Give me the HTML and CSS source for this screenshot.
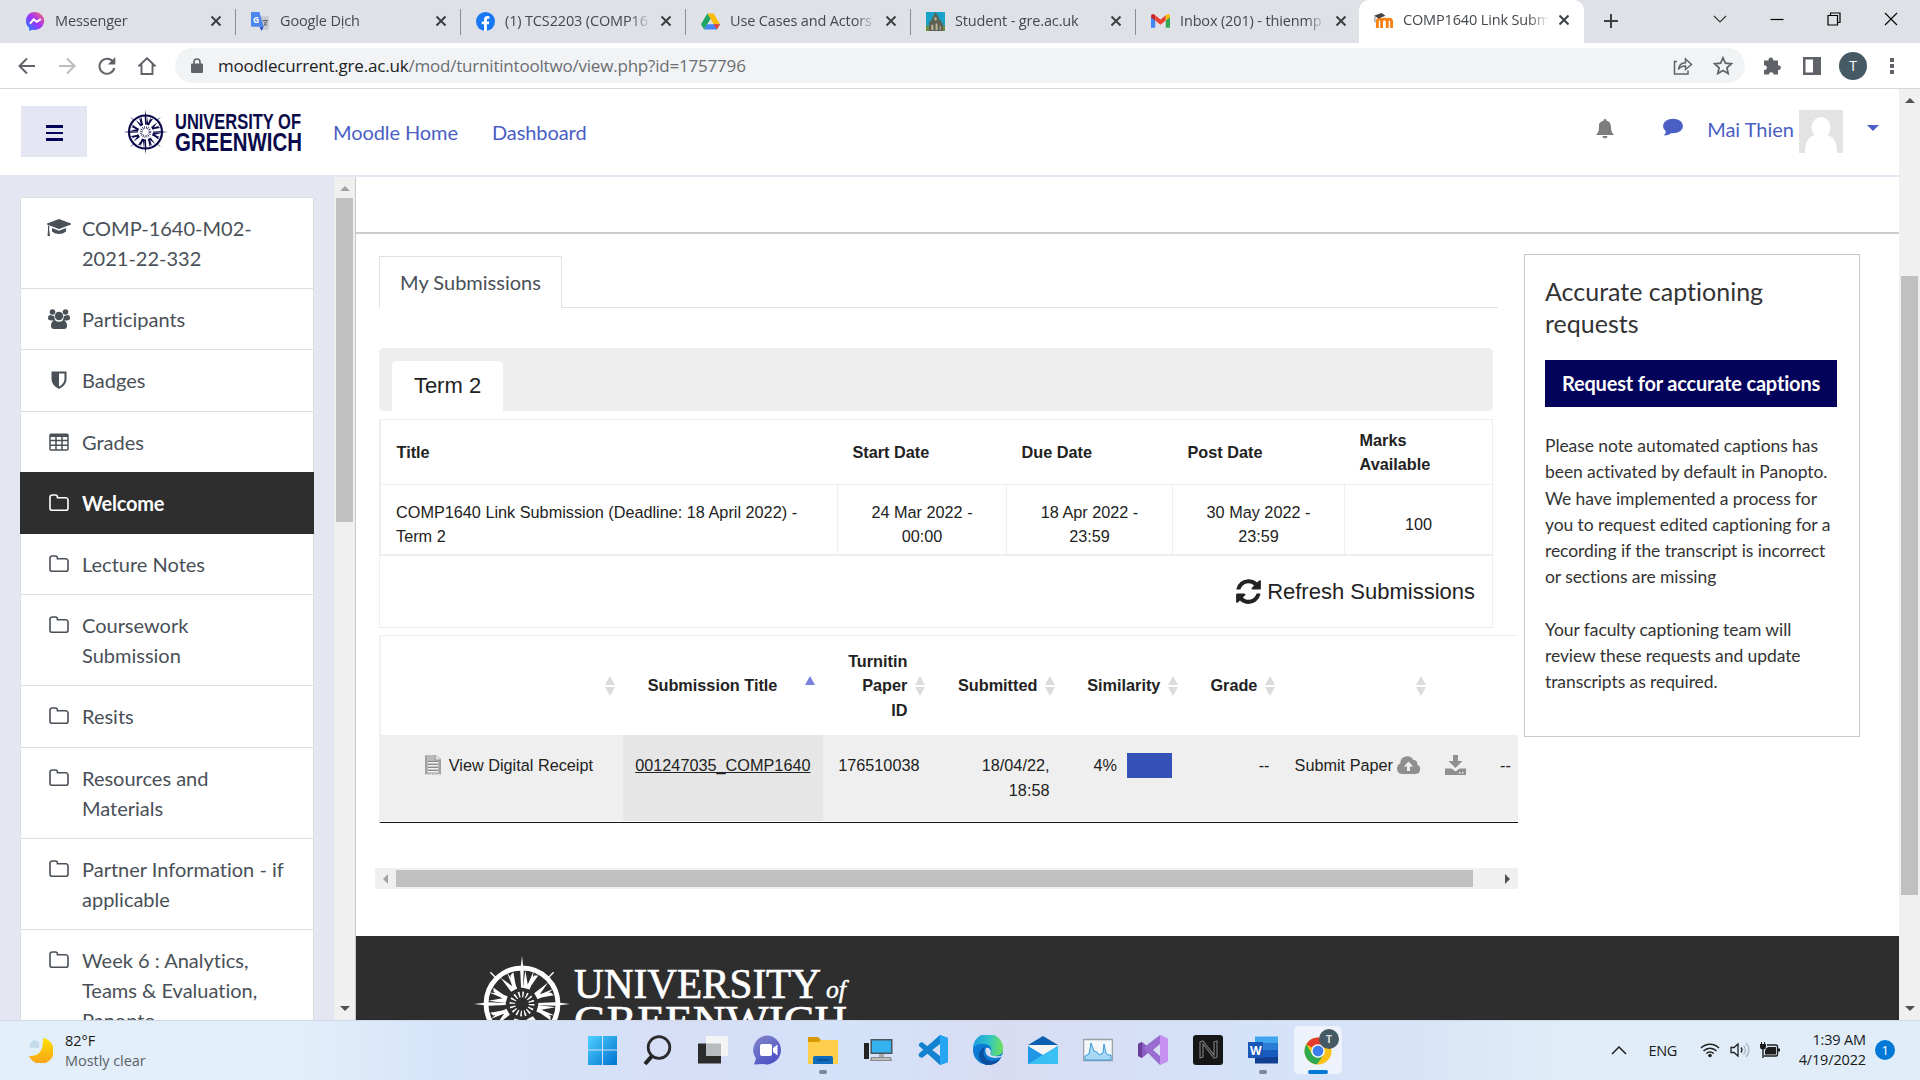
FILE: index.html
```html
<!DOCTYPE html>
<html lang="en">
<head>
<meta charset="utf-8">
<title>COMP1640 Link Submission</title>
<link rel="stylesheet" href="styles.css">
</head>
<body>
<svg class="defs" width="0" height="0">
  <defs>
    <symbol id="folder" viewBox="0 0 20 18"><path d="M1 3.2A2.2 2.2 0 0 1 3.2 1h3.2A2 2 0 0 1 8.4 3v.8h8.4A2.2 2.2 0 0 1 19 6v8.3a2 2 0 0 1-2 2H3a2 2 0 0 1-2-2z" fill="none" stroke="currentColor" stroke-width="1.6"/></symbol>
    <symbol id="x" viewBox="0 0 12 12"><path d="M1.5 1.500l9 9M10.500 1.500l-9 9" stroke="currentColor" stroke-width="2" fill="none"/></symbol>
    <symbol id="sort" viewBox="0 0 10 20"><path d="M5 0l5 9H0zM0 11h10l-5 9z" fill="#dcdcdc"/></symbol>
    <symbol id="compass" viewBox="-50 -50 100 100">
      <circle r="37.500" fill="none" stroke="currentColor" stroke-width="5"/>
      <g fill="currentColor">
        <path id="ray" d="M0-50L1.800-34 1-17-1-17-1.800-34z"/>
        <use href="#ray" transform="rotate(90)"/><use href="#ray" transform="rotate(180)"/><use href="#ray" transform="rotate(270)"/>
        <path id="petal" d="M1-17L3.500-35 6-20 12-34 11-24 8-15z"/>
        <use href="#petal" transform="rotate(45)"/><use href="#petal" transform="rotate(90)"/><use href="#petal" transform="rotate(135)"/>
        <use href="#petal" transform="rotate(180)"/><use href="#petal" transform="rotate(225)"/><use href="#petal" transform="rotate(270)"/><use href="#petal" transform="rotate(315)"/>
        <path id="blade" d="M-9-33L-12-30-10-17-6-16z"/>
        <use href="#blade" transform="rotate(45)"/><use href="#blade" transform="rotate(90)"/><use href="#blade" transform="rotate(135)"/>
        <use href="#blade" transform="rotate(180)"/><use href="#blade" transform="rotate(225)"/><use href="#blade" transform="rotate(270)"/><use href="#blade" transform="rotate(315)"/>
      </g>
      <path d="M27-27l6-6M-27-27l-6-6M27 27l6 6M-27 27l-6 6" stroke="currentColor" stroke-width="1.500"/>
      <circle r="10" fill="none" stroke="currentColor" stroke-width="6" stroke-dasharray="1.500 2.427"/>
    </symbol>
  </defs>
</svg>

<div class="tabstrip">
  <div class="tab"><svg class="fav" viewBox="0 0 18 18"><defs><linearGradient id="ms" x1="0" y1="1" x2="1" y2="0"><stop offset="0" stop-color="#0a8cff"/><stop offset=".5" stop-color="#a033ff"/><stop offset="1" stop-color="#ff6a68"/></linearGradient></defs><path d="M9 0a9 8.500 0 1 1-3 16.700L3 18v-3A8.500 8.500 0 0 1 9 0z" fill="url(#ms)"/><path d="M3.800 11l3.400-4 3 2.300L14 6.800" fill="none" stroke="#fff" stroke-width="1.900"/></svg><span class="tt">Messenger</span><svg class="cl"><use href="#x"/></svg></div>
  <div class="tab"><svg class="fav" viewBox="0 0 18 18"><path d="M7 4h10v13H11z" fill="#c9cdd2"/><path d="M0 1q0-1 1-1h7l4 14H1q-1 0-1-1z" fill="#4a86ee"/><path d="M8 14h4l-2 4z" fill="#2a56c6"/><text x="2" y="10" class="gt">G</text><path d="M11 8h5M13.500 7v1M15 8q-1 4-3 5M12 9l3 4" stroke="#6a7077" fill="none"/></svg><span class="tt">Google Dịch</span><svg class="cl"><use href="#x"/></svg></div>
  <div class="tab"><svg class="fav" viewBox="0 0 20 20"><circle cx="10" cy="10" r="10" fill="#1877f2"/><path d="M8.500 20v-7H6v-3h2.500V8q0-3.700 3.600-3.700l2 .2V7h-1.300q-1.400 0-1.400 1.300V10H14l-.5 3h-2.100v7z" fill="#fff"/></svg><span class="tt">(1) TCS2203 (COMP16</span><svg class="cl"><use href="#x"/></svg></div>
  <div class="tab"><svg class="fav" viewBox="0 0 18 18"><path d="M6 1.500h6l6 10h-6z" fill="#fbbc04"/><path d="M6 1.500l3 5-6 10-3-5z" fill="#1fa463"/><path d="M6 11.500h12l-3 5H3z" fill="#4285f4"/><path d="M12 11.500h6l-3 5z" fill="#ea4335"/></svg><span class="tt">Use Cases and Actors</span><svg class="cl"><use href="#x"/></svg></div>
  <div class="tab"><svg class="fav" viewBox="0 0 18 18"><path d="M0 0h18v18H0z" fill="#1aa3c9"/><path d="M0 13h18v5H0z" fill="#6f8b3d"/><path d="M3 18V9h2V7l2-3 1-2 1-2 1 2 2 3v2h2v3h2v8z" fill="#5d5f50"/><path d="M5 12h2v5H5zM9 11h2v6H9zM13 13h1v4h-1zM8 5h2v3H8z" fill="#b9b49b"/></svg><span class="tt">Student - gre.ac.uk</span><svg class="cl"><use href="#x"/></svg></div>
  <div class="tab last"><svg class="fav" viewBox="0 0 18 18"><path d="M0 4v11h4V8z" fill="#4285f4"/><path d="M14 8v7h4V4z" fill="#34a853"/><path d="M0 4q0-2 2-2l2 1v5L0 5z" fill="#c5221f"/><path d="M4 3l5 4 5-4v5l-5 4-5-4z" fill="#ea4335"/><path d="M14 3q4-2.500 4 1v1l-4 3z" fill="#fbbc04"/></svg><span class="tt">Inbox (201) - thienmp</span><svg class="cl"><use href="#x"/></svg></div>
  <div class="tab active"><svg class="fav" viewBox="0 0 20 18"><path d="M3.500 17V10q0-2.500 2.300-2.500T8 10v7M8 10q0-2.500 3-2.500t3 2.500v7M14 10q0-2.500 2-2.500 2.500 0 2.500 2.500v7" fill="none" stroke="#f98012" stroke-width="3"/><path d="M0 4l8-3 4 3-7 3z" fill="#444"/><path d="M1 5v6" stroke="#777"/></svg><span class="tt">COMP1640 Link Subm</span><svg class="cl"><use href="#x"/></svg></div>
  <svg class="plus" viewBox="0 0 16 16"><path d="M8 1v14M1 8h14" stroke="#3c4043" stroke-width="2"/></svg>
  <div class="winbtns">
    <svg viewBox="0 0 14 14"><path d="M1 4l6 6 6-6" fill="none" stroke="#333" stroke-width="1.200"/></svg>
    <svg viewBox="0 0 14 14"><path d="M0.500 7.500h13" stroke="#000" stroke-width="1.200"/></svg>
    <svg viewBox="0 0 14 14"><path d="M1 3.500h9.500V13H1zM3.500 3V1H13v9.500h-2.500" fill="none" stroke="#000" stroke-width="1.200"/></svg>
    <svg viewBox="0 0 14 14"><path d="M1 1l12 12M13 1L1 13" stroke="#000" stroke-width="1.100"/></svg>
  </div>
</div>

<div class="toolbar">
  <div class="nav">
    <svg viewBox="0 0 18 18"><path d="M17 9H2M9 1.500L1.500 9 9 16.500" fill="none" stroke="#5f6368" stroke-width="2"/></svg>
    <svg viewBox="0 0 18 18"><path d="M1 9h15M9 1.500L16.500 9 9 16.500" fill="none" stroke="#babcbe" stroke-width="2"/></svg>
    <svg viewBox="0 0 18 18"><path d="M15.500 5.500A7.500 7.500 0 1 0 16.300 11" fill="none" stroke="#5f6368" stroke-width="2"/><path d="M17.300 0v7.500h-7.500z" fill="#5f6368"/></svg>
    <svg viewBox="0 0 18 18"><path d="M3.500 17V8.500H1.300L9 1.200l7.700 7.300h-2.200V17H3.500z" fill="none" stroke="#5f6368" stroke-width="1.900"/></svg>
  </div>
  <div class="omni">
    <svg class="lock" viewBox="0 0 12 15"><path d="M1 5.500h10q1 0 1 1V14q0 1-1 1H1q-1 0-1-1V6.500q0-1 1-1z" fill="#5f6368"/><path d="M3 6V4a3 3 0 0 1 6 0v2" fill="none" stroke="#5f6368" stroke-width="1.600"/></svg>
    <span class="url"><b>moodlecurrent.gre.ac.uk</b>/mod/turnitintooltwo/view.php?id=1757796</span>
    <svg class="share" viewBox="0 0 20 18"><path d="M4 4.500H1.500v12.500h13.500v-3.500M5.500 12.500q.5-6.500 7-6.800V2l6 5.500-6 5V9q-5 0-7 3.500z" fill="none" stroke="#5f6368" stroke-width="1.500"/></svg>
    <svg class="star" viewBox="0 0 20 20"><path d="M10 1.800l2.400 5.400 5.900.6-4.400 4 1.300 5.800-5.200-3-5.200 3 1.300-5.800-4.400-4 5.900-.6z" fill="none" stroke="#5f6368" stroke-width="1.700"/></svg>
  </div>
  <div class="ext">
    <svg viewBox="0 0 20 20"><path d="M2 4.500h4.500a2.400 2.400 0 1 1 4.700 0H16v4.700a2.400 2.400 0 1 1 0 4.700V18.500h-4.500a2.300 2.300 0 1 0-4.600 0H2V14a2.400 2.400 0 1 0 0-4.700z" fill="#5f6368"/></svg>
    <svg viewBox="0 0 20 20"><path d="M1 1h18v18H1zM3.500 3.500v13H11v-13z" fill="#5f6368" fill-rule="evenodd"/></svg>
    <span class="prof">T</span>
    <svg class="dots" viewBox="0 0 4 18"><path d="M0 1h4v4H0zM0 7h4v4H0zM0 13h4v4H0z" fill="#5f6368"/></svg>
  </div>
</div>

<div class="page">
  <div class="view">
    <header class="head">
      <div class="burger"><i></i><i></i><i></i></div>
      <svg class="logo" viewBox="0 0 178 44"><svg x="-1" y="0" width="45" height="44" color="#0a0a4a"><use href="#compass"/></svg>
        <text x="51" y="19" class="lg" font-size="22" textLength="126" lengthAdjust="spacingAndGlyphs">UNIVERSITY OF</text>
        <text x="51" y="41" class="lg" font-size="26.500" textLength="127" lengthAdjust="spacingAndGlyphs">GREENWICH</text></svg>
      <a class="hl h1">Moodle Home</a><a class="hl h2">Dashboard</a>
      <div class="user">
        <svg class="bell" viewBox="0 0 18 20"><path d="M9 0a1.300 1.300 0 0 1 1.300 1.600C13.500 2.300 15 5 15 8q0 5.500 3 8H0q3-2.500 3-8 0-3 .0-3Q4.500 2.300 7.700 1.600A1.300 1.300 0 0 1 9 0zM6.500 17h5a2.500 2.500 0 0 1-5 0z" fill="#7d7d7d"/></svg>
        <svg class="bub" viewBox="0 0 20 18"><ellipse cx="10" cy="7.500" rx="10" ry="7.300" fill="#4a5ec4"/><path d="M3 11q0 4-2 6 5 0 8-3z" fill="#4a5ec4"/></svg>
        <a class="hl">Mai Thien</a>
        <svg class="ava" viewBox="0 0 44 43"><path d="M0 0h44v43H0z" fill="#e3e3e3"/><ellipse cx="22" cy="17.500" rx="9.500" ry="10.500" fill="#fff"/><path d="M6 43q0-17 11-18h10q11 1 11 18z" fill="#fff"/></svg>
        <svg class="caret" viewBox="0 0 12 6"><path d="M0 0h12L6 6z" fill="#4a5ec4"/></svg>
      </div>
    </header>
    <div class="body">
      <aside class="side">
        <nav class="menu">
          <div class="mi"><svg viewBox="0 0 24 18"><path d="M12 0l13 5-13 5L-1 5z" fill="currentColor"/><path d="M5 9l7 2.700L19 9v3.500Q16 15 12 15t-7-2.500zM1 6.500h1.200V11l.8 6H.5L1 11z" fill="currentColor"/></svg><span>COMP-1640-M02-2021-22-332</span></div>
          <div class="mi"><svg viewBox="0 0 22 20"><g fill="currentColor"><circle cx="4.500" cy="3" r="2.800"/><circle cx="17.500" cy="3" r="2.800"/><circle cx="11" cy="7" r="4.200"/><path d="M0 9q0-3 2.500-3 3 1 3.700 1 0 3 1.500 4.500H3.500Q0 11.500 0 9zM22 9q0-3-2.500-3-3 1-3.700 1 0 3-1.500 4.500h4.200Q22 11.500 22 9zM3 17q0-5.500 4-5.500 4 2.500 8 0 4 0 4 5.500 0 3-3 3H6q-3 0-3-3z"/></g></svg><span>Participants</span></div>
          <div class="mi"><svg viewBox="0 0 22 20"><path d="M3.500 1.500h15V9q0 6-7.500 10Q3.500 15 3.500 9zM11 3.600v13.200Q16.500 13.500 16.500 9V3.600z" fill="currentColor" fill-rule="evenodd"/></svg><span>Badges</span></div>
          <div class="mi"><svg viewBox="0 0 22 20"><path d="M3 2.300h16q1 0 1 1V17q0 1-1 1H3q-1 0-1-1V3.300q0-1 1-1zM2 8.500h18M2 13.200h18M8 5v13M14 5v13" fill="none" stroke="currentColor" stroke-width="1.500"/><path d="M2 2h18v3H2z" fill="currentColor"/></svg><span>Grades</span></div>
          <div class="mi on"><svg class="fo"><use href="#folder"/></svg><span>Welcome</span></div>
          <div class="mi"><svg class="fo"><use href="#folder"/></svg><span>Lecture Notes</span></div>
          <div class="mi"><svg class="fo"><use href="#folder"/></svg><span>Coursework Submission</span></div>
          <div class="mi"><svg class="fo"><use href="#folder"/></svg><span>Resits</span></div>
          <div class="mi"><svg class="fo"><use href="#folder"/></svg><span>Resources and Materials</span></div>
          <div class="mi"><svg class="fo"><use href="#folder"/></svg><span>Partner Information - if applicable</span></div>
          <div class="mi"><svg class="fo"><use href="#folder"/></svg><span>Week 6 : Analytics, Teams &amp; Evaluation, Panopto</span></div>
        </nav>
        <div class="sb sbside"><svg viewBox="0 0 10 5"><path d="M0 5h10L5 0z" fill="#a3a3a3"/></svg><i></i><svg viewBox="0 0 10 5"><path d="M0 0h10L5 5z" fill="#505050"/></svg></div>
      </aside>
      <main>
        <div class="topline"></div>
        <div class="cols">
          <section class="left">
            <div class="tabs"><div class="mytab">My Submissions</div><div class="rest"></div></div>
            <div class="termbar"><div class="term">Term 2</div></div>
            <div class="t1">
              <div class="th">Title</div><div class="th">Start Date</div><div class="th">Due Date</div><div class="th">Post Date</div><div class="th">Marks<br>Available</div>
              <div class="td tl">COMP1640 Link Submission (Deadline: 18 April 2022) - Term 2</div><div class="td">24 Mar 2022 -<br>00:00</div><div class="td">18 Apr 2022 -<br>23:59</div><div class="td">30 May 2022 -<br>23:59</div><div class="td">100</div>
            </div>
            <div class="refresh"><svg viewBox="0 120 1536 1550"><path fill="#222" d="M1511 1056q0 5-1 7-64 268-268 434.500t-478 166.500q-146 0-282.500-55t-243.500-157l-129 129q-19 19-45 19t-45-19-19-45v-448q0-26 19-45t45-19h448q26 0 45 19t19 45-19 45l-137 137q71 66 161 102t187 36q134 0 250-65t186-179q11-17 53-117 8-23 30-23h192q13 0 22.500 9.500t9.500 22.500zm25-800v448q0 26-19 45t-45 19h-448q-26 0-45-19t-19-45 19-45l138-138q-148-137-349-137-134 0-250 65t-186 179q-11 17-53 117-8 23-30 23h-199q-13 0-22.500-9.500t-9.500-22.500v-7q65-268 270-434.500t480-166.500q146 0 284 55.500t245 156.500l130-129q19-19 45-19t45 19 19 45z"/></svg><span>Refresh Submissions</span></div>
            <div class="t2">
              <div class="sh"><svg><use href="#sort"/></svg></div>
              <div class="sh wide"><span>Submission Title</span><svg viewBox="0 0 10 20"><path d="M5 0l5 9H0z" fill="#7a80e0"/></svg></div>
              <div class="sh"><span>Turnitin<br>Paper<br>ID</span><svg><use href="#sort"/></svg></div>
              <div class="sh"><span>Submitted</span><svg><use href="#sort"/></svg></div>
              <div class="sh"><span>Similarity</span><svg><use href="#sort"/></svg></div>
              <div class="sh"><span>Grade</span><svg><use href="#sort"/></svg></div>
              <div class="sh"><svg><use href="#sort"/></svg></div>
              <div class="sh"></div>
              <div class="sd c1"><svg class="doc" viewBox="0 0 16 20"><path d="M0 0h11l5 4v16l-2-1-2 1-2-1-2 1-2-1-2 1-2-1-2 1z" fill="#b9b9b9"/><path d="M1 1v18M15 5v14" stroke="#8a8a8a" fill="none"/><path d="M10 0v5h6" fill="#e6e6e6" stroke="#8f8f8f"/><path d="M3 7.500h10M3 10.500h10M3 13.500h10M3 16.500h10" stroke="#f4f4f4" stroke-width="1.500"/><path d="M3 6.500h10M3 9.500h10M3 12.500h10M3 15.500h10" stroke="#8a8a8a"/></svg><span>View Digital Receipt</span></div>
              <div class="sd c2"><u>001247035_COMP1640</u></div>
              <div class="sd"><span>176510038</span></div>
              <div class="sd"><span>18/04/22,<br>18:58</span></div>
              <div class="sd"><span>4%</span><i class="sim"></i></div>
              <div class="sd"><span>--</span></div>
              <div class="sd c7"><span>Submit Paper</span><svg viewBox="0 0 24 18"><path d="M5.500 18A5.500 5.500 0 0 1 3.300 7.500 7 7 0 0 1 16.500 4a3.600 3.600 0 0 1 3.600 4.500A5 5 0 0 1 19 18zM11.500 5.500L6.800 10.500H10V15h3v-4.500h3.200z" fill="#8f8f8f" fill-rule="evenodd"/></svg></div>
              <div class="sd c8"><svg viewBox="0 0 21 20"><path d="M8 0h5v6h4.500l-7 7-7-7H8zM0 13.500h6.500l4 3 4-3H21V20H0zM14 17v1.500h1.500V17zM17 17v1.500h1.500V17z" fill="#8f8f8f" fill-rule="evenodd"/></svg><span>--</span></div>
            </div>
            <div class="hsb"><svg viewBox="0 0 5 10"><path d="M5 0v10L0 5z" fill="#a3a3a3"/></svg><i></i><svg viewBox="0 0 5 10"><path d="M0 0v10l5-5z" fill="#505050"/></svg></div>
          </section>
          <section class="card">
            <h2>Accurate captioning requests</h2>
            <div class="btn">Request for accurate captions</div>
            <p>Please note automated captions has been activated by default in Panopto. We have implemented a process for you to request edited captioning for a recording if the transcript is incorrect or sections are missing</p>
            <p>Your faculty captioning team will review these requests and update transcripts as required.</p>
          </section>
        </div>
        <footer>
          <svg class="flogo" viewBox="0 0 400 84"><svg x="0" y="20" width="96" height="96" color="#fff"><use href="#compass"/></svg>
          <text x="100" y="62" class="fs" font-size="42" textLength="247" lengthAdjust="spacingAndGlyphs">UNIVERSITY</text>
          <text x="352" y="62" class="fi" font-size="25" textLength="20" lengthAdjust="spacingAndGlyphs">of</text>
          <text x="100" y="99" class="fs" font-size="42" textLength="273" lengthAdjust="spacingAndGlyphs">GREENWICH</text></svg>
        </footer>
      </main>
    </div>
  </div>
  <div class="sb sbpage"><svg viewBox="0 0 10 5"><path d="M0 5h10L5 0z" fill="#505050"/></svg><i></i><svg viewBox="0 0 10 5"><path d="M0 0h10L5 5z" fill="#505050"/></svg></div>
</div>

<div class="taskbar">
  <div class="weather">
    <svg viewBox="0 0 26 26"><defs><linearGradient id="mo" x1="0" y1="0" x2="0" y2="1"><stop offset="0" stop-color="#ffe100"/><stop offset="1" stop-color="#f9a11b"/></linearGradient></defs><path d="M16 1a13 13 0 1 1-14 18Q17 20 16 1z" fill="url(#mo)"/><path d="M4 11a3 3 0 0 1 0-5q2-4 6-2 3 2 2 7z" fill="#c3dbea"/></svg>
    <div><div class="deg">82°F</div><div class="wx">Mostly clear</div></div>
  </div>
  <div class="apps">
    <div><svg viewBox="0 0 30 30"><defs><linearGradient id="wi" x1="0" y1="0" x2="1" y2="1"><stop offset="0" stop-color="#4fd0ff"/><stop offset="1" stop-color="#0071d0"/></linearGradient></defs><path d="M0 1h14v13.500H0zM15 1h14v13.500H15zM0 15.500h14V30H0zM15 15.500h14V30H15z" fill="url(#wi)"/></svg></div>
    <div><svg viewBox="0 0 30 30"><circle cx="16" cy="12.500" r="10.800" fill="none" stroke="#2b2b2b" stroke-width="2.800"/><path d="M9 21l-7 8" stroke="#222" stroke-width="4"/></svg></div>
    <div><svg viewBox="0 0 30 30"><path d="M0 8.500h23v20H0z" fill="#2b2b2b"/><path d="M8 1h22v20H8z" fill="#f4f4f4"/><path d="M8 8.500h15V21H8z" fill="#b9bcbf"/></svg></div>
    <div><svg viewBox="0 0 30 30"><defs><linearGradient id="ch" x1="0" y1="0" x2=".6" y2="1"><stop offset="0" stop-color="#9b6fb5"/><stop offset=".3" stop-color="#7279c9"/><stop offset="1" stop-color="#4f52c4"/></linearGradient></defs><path d="M15 .5A14.500 14.500 0 1 1 10 29L1 29.500l2-6A14.500 14.500 0 0 1 15 .5z" fill="url(#ch)"/><rect x="7" y="9" width="12" height="12" rx="2" fill="#fff"/><path d="M20 13l4.500-3.500v11L20 17z" fill="#fff"/></svg></div>
    <div class="run"><svg viewBox="0 0 30 30"><path d="M0 3q0-1 1-1h9l3 3h16q1 0 1 1v8H0z" fill="#d99a00"/><path d="M0 7h11l2-2h16q1 0 1 1v23H0z" fill="#ffcf4b"/><path d="M5 29v-6q0-2 2-2h16q2 0 2 2v6z" fill="#0f6cbd"/><path d="M9 25h12" stroke="#0a4a87" stroke-width="1.500"/></svg></div>
    <div><svg viewBox="0 0 30 30"><rect x="1" y="8" width="5" height="16" fill="#222"/><rect x="7.500" y="4" width="22" height="15" fill="#4a5560"/><rect x="9" y="5.500" width="19" height="12" fill="#35b2ee"/><path d="M16 19h5v3h-5z" fill="#aaa"/><path d="M8 22h20l1 4H7z" fill="#8c8c8c"/><path d="M9 24h18" stroke="#eee"/></svg></div>
    <div><svg viewBox="0 0 30 30"><path d="M22 0l8 3v24l-8 3L1 11q-1-2 1-3l2-1 18 14V9L4 23l-3-1.500q-1-2 0-3z" fill="#1383d1"/><path d="M22 0l8 3v24l-8 3z" fill="#25a5f2"/></svg></div>
    <div><svg viewBox="0 0 30 30"><defs><linearGradient id="ed" x1="0" y1=".4" x2="1" y2=".5"><stop offset="0" stop-color="#1b9de2"/><stop offset=".5" stop-color="#2fc3c9"/><stop offset="1" stop-color="#6ee05a"/></linearGradient></defs><circle cx="15" cy="15" r="15" fill="#0c7bd6"/><path d="M0 13A15 15 0 0 1 30 14q0 7-8 7-5 0-4-3 2-8-6-9Q4 8 0 13z" fill="url(#ed)"/><path d="M12 12q-4 8 3 13 6 3 13-2-5 8-15 7-8-3-7-11 1-5 6-7z" fill="#0b4fa0"/><path d="M13 13q-2 5 2 8 7 4 15 0l1-2q-4 3-9 2-6 0-4-4-1-5-5-4z" fill="#d7dff4"/></svg></div>
    <div><svg viewBox="0 0 30 30"><path d="M0 10L15 1l15 9z" fill="#0a5fb0"/><path d="M2 10h26v12H2z" fill="#f4f4f4"/><path d="M0 11l15 9 15-9v18H0z" fill="#1f97e6"/><path d="M0 29l30-18v18z" fill="#39c0f3"/></svg></div>
    <div><svg viewBox="0 0 30 30"><path d="M.5 4.500h29v21H.5z" fill="#f4f8fb" stroke="#9aa1a8" stroke-width="1.500"/><path d="M2 21l4-2 2-11 3 8 3 1 2 3 4-2 1-9 2 9 2 2h3v5H2z" fill="#a9d8f5" stroke="#3b9ad8" stroke-width="1"/></svg></div>
    <div><svg viewBox="0 0 30 30"><path d="M0 9l4-2 18 15V8L4 23l-4-2z" fill="#8a5bc0"/><path d="M0 9l4-2v16l-4-2z" fill="#6a3f9c"/><path d="M22 0l8 4v22l-8 4L8 16l-3-3z" fill="#9a6dd0"/><path d="M22 0l8 4v22l-8 4z" fill="#c692f2"/><path d="M22 9v12l-7-6z" fill="#d7dff4"/></svg></div>
    <div><svg viewBox="0 0 30 30"><rect width="30" height="30" rx="3" fill="#161616"/><path d="M7 23V7l3-1 11 14V7l3-1v16l-3 1L10 9v13z" fill="none" stroke="#777" stroke-width="1.200"/></svg></div>
    <div class="run"><svg viewBox="0 0 30 30"><path d="M7 1.500h23V8H7z" fill="#41a5ee"/><path d="M7 8h23v7H7z" fill="#2b7cd3"/><path d="M7 15h23v7H7z" fill="#185abd"/><path d="M7 22h23v6.500H7z" fill="#103f91"/><path d="M0 7h15v16H0z" fill="#1a56b5"/><text x="2" y="19.500" class="wd">W</text></svg></div>
    <div class="cur"><svg viewBox="0 0 30 30"><circle cx="15" cy="16" r="13.500" fill="#fbc116"/><path d="M15 16L3.300 9.200A13.500 13.500 0 0 1 26.700 9.200z" fill="#e33b2e"/><path d="M3.300 9.200A13.500 13.500 0 0 0 14 29.500L21 19l-6 4-6-4z" fill="#2da94f"/><path d="M15 9.500h11.700" stroke="#e33b2e" stroke-width="1"/><circle cx="15" cy="16" r="6.800" fill="#fff"/><circle cx="15" cy="16" r="5.400" fill="#3b7ded"/></svg><b>T</b></div>
  </div>
  <div class="tray">
    <svg class="chev" viewBox="0 0 16 9"><path d="M1 8l7-7 7 7" fill="none" stroke="#222" stroke-width="1.500"/></svg>
    <span class="eng">ENG</span>
    <svg class="wifi" viewBox="0 0 20 16"><g fill="none" stroke="#222" stroke-width="1.400"><path d="M1 6a12.700 12.700 0 0 1 18 0M3.500 9a9 9 0 0 1 13 0M6.300 11.500a5.200 5.200 0 0 1 7.400 0"/></g><circle cx="10" cy="13.500" r="1.800" fill="#222"/></svg>
    <svg class="vol" viewBox="0 0 20 16"><path d="M1 5.500h3L8 2v12l-4-3.500H1zM11 5.500q2 2.500 0 5" fill="none" stroke="#222" stroke-width="1.300"/><path d="M13.500 3.500q4 4.500 0 9M16 1q6 7 0 14" fill="none" stroke="#a9b3bd" stroke-width="1.200"/></svg>
    <svg class="bat" viewBox="0 0 20 16"><path d="M7 3h9q1.500 0 1.500 1.500v8Q17.500 14 16 14H4" fill="none" stroke="#1c1c1c" stroke-width="1.400"/><path d="M6 6.500L8 5h8v7.500H5V9zM18 6.500h2v3h-2zM0 2h6v3q0 2-2.300 2.500V16H2.300V7.500Q0 7 0 5zM1 0h1v2H1zM4 0h1v2H4z" fill="#1c1c1c"/></svg>
    <div class="clock"><div>1:39 AM</div><div>4/19/2022</div></div>
    <span class="note">1</span>
  </div>
</div>
</body>
</html>
```
FILE: styles.css
```css
* { box-sizing: border-box; }
body { margin: 0; width: 1920px; height: 1080px; overflow: hidden; display: flex; flex-direction: column; font-family: "Lato", sans-serif; font-variant-ligatures: none; background: #fff; }
svg { display: block; flex: none; }
.defs { position: absolute; }

/* browser tab strip */
.tabstrip { height: 43px; background: #dee1e6; display: flex; align-items: center; padding-left: 11px; font-family: "Open Sans", sans-serif; }
.tab { width: 225px; height: 26px; display: flex; align-items: center; padding-left: 15px; border-right: 1px solid #8b8e93; font-size: 14.5px; letter-spacing: -.15px; color: #45494d; }
.tab.last { border-right: 0; }
.tab.active { height: 43px; background: #fff; border: 0; border-radius: 10px 10px 0 0; margin-left: -2px; padding-bottom: 2px; }
.fav { width: 19px; height: 19px; margin-bottom: 1px; }
.tt { width: 146px; margin-left: 10px; overflow: hidden; white-space: nowrap; padding-bottom: 2px; -webkit-mask-image: linear-gradient(90deg, #000 86%, transparent); mask-image: linear-gradient(90deg, #000 86%, transparent); }
.cl { width: 12px; height: 12px; margin-left: 9px; margin-bottom: 1px; color: #3c4043; }
.gt { font: bold 8px "Open Sans", sans-serif; fill: #fff; }
.plus { width: 16px; height: 16px; margin: 0 0 1px 19px; }
.winbtns { display: flex; gap: 43px; margin-left: auto; padding-right: 22px; padding-bottom: 6px; }
.winbtns svg { width: 14px; height: 14px; }

/* address bar */
.toolbar { height: 46px; border-bottom: 1px solid #d5d7d9; display: flex; align-items: center; }
.nav { display: flex; gap: 22px; padding-left: 18px; width: 175px; }
.nav svg { width: 18px; height: 18px; }
.omni { width: 1570px; height: 35px; border-radius: 18px; background: #f1f3f4; display: flex; align-items: center; padding-left: 16px; }
.lock { width: 12px; height: 15px; }
.url { margin-left: 15px; flex: 1; font-family: "Open Sans", sans-serif; font-size: 17px; letter-spacing: -.2px; color: #6a6e73; }
.url b { font-weight: 400; color: #202124; }
.share { width: 20px; height: 18px; margin-right: 20px; }
.star { width: 20px; height: 20px; margin-right: 12px; }
.ext { display: flex; align-items: center; padding-left: 17px; gap: 20px; }
.ext svg { width: 20px; height: 20px; }
.prof { width: 28px; height: 28px; border-radius: 50%; background: #455a64; color: #fff; font: 14px/28px "Open Sans", sans-serif; text-align: center; margin-left: -3px; }
.ext .dots { width: 4px; height: 18px; margin-left: 3px; }

/* site */
.page { height: 931px; display: grid; grid-template-columns: 1899px 21px; }
.view { display: flex; flex-direction: column; height: 931px; overflow: hidden; }
.head { height: 88px; flex: none; border-bottom: 2px solid #e4e6f3; display: flex; padding-left: 21px; }
.burger { width: 66px; height: 51px; margin-top: 17px; background: #e4e6f3; display: flex; flex-direction: column; justify-content: center; align-items: center; gap: 4px; padding-top: 3px; }
.burger i { width: 17px; height: 2.500px; background: #03035c; }
.logo { width: 178px; height: 44px; margin: 21px 0 0 37px; overflow: visible; }
.lg { font-family: "Liberation Sans Narrow", "Liberation Sans", sans-serif; font-weight: 700; fill: #0a0a4a; }
.hl { font-size: 20px; line-height: 30px; letter-spacing: -.08px; color: #4a5ec4; white-space: nowrap; }
.h1 { margin: 28px 0 0 31px; }
.h2 { margin: 28px 0 0 34px; }
.user { margin-left: auto; display: flex; align-items: flex-start; padding-right: 20px; }
.bell { width: 18px; height: 20px; margin: 30px 49px 0 0; }
.bub { width: 20px; height: 19px; margin: 29px 24px 0 0; }
.user .hl { margin: 25px 5px 0 0; letter-spacing: 0; }
.ava { width: 44px; height: 43px; margin-top: 21px; }
.caret { width: 12px; height: 6px; margin: 36px 0 0 24px; }
.body { height: 843px; display: grid; grid-template-columns: 356px 1543px; }
.side { background: #e4e6f2; border-right: 1px solid #c8c8c8; height: 843px; overflow: hidden; display: flex; justify-content: space-between; padding-left: 20px; }
.menu { width: 294px; margin-top: 20px; height: 900px; border: 1px solid #dedede; background: #fff; }
.mi { display: flex; align-items: flex-start; padding: 15px 25px 15.200px 26px; border-bottom: 1px solid #dedede; font-size: 20px; line-height: 30px; color: #495057; }
.mi svg { width: 24px; height: 20px; margin: 5px 11px 0 0; }
.mi svg.fo { width: 20px; height: 18px; margin: 6px 13px 0 2px; }
.mi.on { background: #2e2e2e; color: #fff; font-weight: 700; letter-spacing: -.25px; margin: -1px -1px 0; padding-left: 27px; padding-top: 16px; border-color: #2e2e2e; }
.sb { background: #f0f0f0; width: 21px; display: flex; flex-direction: column; align-items: center; justify-content: space-between; }
.sb svg { width: 10px; height: 5px; }
.sb i { width: 17px; background: #c0c0c0; }
.sbside { height: 843px; padding: 9px 0; }
.sbside i { height: 324px; margin: 7px 0 auto; }
.sbpage { padding: 9px 0; }
.sbpage i { height: 619px; margin: 173px 0 auto; }
main { height: 843px; display: flex; flex-direction: column; overflow: hidden; }
.topline { height: 57px; flex: none; border-bottom: 2px solid #ccc; }
.cols { height: 702px; flex: none; display: flex; }
.left { width: 1143px; margin-left: 19px; padding: 22px 0 0 4px; font-family: "Liberation Sans", sans-serif; font-size: 16.250px; color: #222; }
.tabs { display: flex; height: 52px; width: 1119px; }
.mytab { width: 183px; border: 1px solid #dee2e6; border-bottom: 0; font: 20px/50px "Lato", sans-serif; color: #495057; text-align: center; white-space: nowrap; }
.rest { flex: 1; border-bottom: 1px solid #dee2e6; }
.termbar { width: 1114px; height: 63px; margin-top: 40px; background: #eee; border-radius: 5px; padding: 13px 0 0 13px; }
.term { width: 111px; height: 50px; background: #fff; border-radius: 5px 5px 0 0; text-align: center; font-size: 22px; line-height: 50px; }
.t1 { width: 1114px; margin-top: 8px; border: 1px solid #eee; border-left-width: 2px; border-bottom-width: 2px; display: grid; grid-template-columns: 456px 169px 166px 172px 1fr; grid-template-rows: 65px 69px; line-height: 24.200px; }
.th { font-weight: 700; display: flex; align-items: center; padding-left: 15.500px; border-bottom: 1px solid #eee; }
.td { display: flex; align-items: center; justify-content: center; text-align: center; border-left: 1px solid #eee; padding-top: 9px; }
.td.tl { text-align: left; justify-content: flex-start; padding: 9px 30px 0 15px; border: 0; }
.refresh { width: 1114px; height: 72px; border: 1px solid #eee; border-top: 0; display: flex; justify-content: flex-end; align-items: center; padding-right: 17px; font-size: 22px; }
.refresh svg { width: 25px; height: 25px; margin-right: 6px; }
.t2 { width: 1139px; margin-top: 7px; border-top: 1px solid #eee; border-left: 2px solid #f0f0f0; border-bottom: 1px solid #111; display: grid; grid-template-columns: 242px 200px 110px 130px 123px 97px 151px 84px; grid-template-rows: 99px 87px; line-height: 24.600px; }
.sh { font-weight: 700; display: flex; align-items: center; justify-content: flex-end; text-align: right; padding-right: 7.600px; white-space: nowrap; }
.sh svg { width: 10px; height: 20px; margin-left: 8px; }
.sh.wide svg { margin-left: 28px; }
.sd { background: #efefef; border-bottom: 1px solid #fff; display: flex; align-items: flex-start; justify-content: flex-end; text-align: right; padding: 18px 13.500px 0 0; white-space: nowrap; }
.c1 { padding-right: 30px; }
.c2 { background: #e6e6e6; padding-right: 12.500px; }
.doc { width: 16px; height: 20px; margin: 2px 8px 0 0; }
.sim { width: 45px; height: 25px; background: #3552b8; margin: 0 .5px 0 10px; }
.c7 { padding-right: 13px; }
.c7 svg { width: 24px; height: 18px; margin: 3px 0 0 4px; }
.c8 { justify-content: flex-start; padding-left: 11px; }
.c8 svg { width: 21px; height: 20px; margin: 2px 34px 0 0; }
.hsb { width: 1143px; height: 21px; margin: 45px 0 0 -4px; background: #f0f0f0; display: flex; align-items: center; justify-content: space-between; padding: 0 8px; }
.hsb svg { width: 5px; height: 10px; }
.hsb i { width: 1077px; height: 17px; background: #c0c0c0; margin: 0 auto 0 8px; }
.card { width: 336px; height: 483px; margin: 20px 0 0 6px; border: 1px solid #c8c8c8; padding: 20px; color: #333; }
.card h2 { margin: 0; font-weight: 400; font-size: 25px; line-height: 32px; }
.btn { width: 292px; height: 47px; margin: 21px 0 26px; background: #03035c; color: #fff; font-size: 20px; font-weight: 700; line-height: 47px; text-align: center; white-space: nowrap; letter-spacing: -.18px; }
.card p { margin: 0 0 26px 0; font-size: 17.500px; line-height: 26.300px; letter-spacing: -.08px; }
footer { flex: 1; background: #2e2e2e; overflow: hidden; padding-left: 118px; }
.flogo { width: 400px; height: 84px; }
.fs { font-family: "Liberation Serif", serif; fill: #fff; stroke: #fff; stroke-width: .7; }
.fi { font-family: "Liberation Serif", serif; font-style: italic; fill: #fff; stroke: #fff; stroke-width: .5; }

/* taskbar */
.taskbar { height: 60px; display: grid; grid-template-columns: 574px 1fr auto; border-top: 1px solid #cfd8e8; background: linear-gradient(90deg, #e2eef8 0, #e2eef9 300px, #d6e4fa 440px, #d6def6 700px, #d3e3fa 850px, #d8dcf2 1000px, #d4e2fa 1250px, #d8e2f6 1400px, #e0edf8 1560px); font-family: "Open Sans", sans-serif; }
.weather { display: flex; padding: 10px 0 0 27px; gap: 12px; font-size: 14.500px; line-height: 20px; letter-spacing: -.05px; }
.weather svg { width: 26px; height: 26px; margin-top: 6px; }
.deg { color: #1a1a1a; }
.wx { color: #5c6167; }
.apps { display: flex; gap: 7px; padding-top: 5px; margin-left: 5px; }
.apps > div { width: 48px; height: 48px; padding: 9px; border-radius: 5px; position: relative; }
.apps svg { width: 30px; height: 30px; }
.run::after { content: ""; position: absolute; left: 20px; bottom: 0; width: 8px; height: 4px; border-radius: 2px; background: #7c8593; }
.apps .cur { background: #eef2fb; }
.cur::after { content: ""; position: absolute; left: 14px; bottom: 0; width: 20px; height: 4px; border-radius: 2px; background: #0078d7; }
.cur b { position: absolute; left: 25px; top: 3px; width: 20px; height: 20px; border-radius: 50%; background: #455a64; color: #d5dade; font-size: 11px; line-height: 20px; text-align: center; }
.wd { font: bold 12px "Open Sans", sans-serif; fill: #fff; }
.tray { display: flex; align-items: center; padding: 0 25px 1px 0; font-size: 14.500px; letter-spacing: -.2px; color: #1a1a1a; }
.chev { width: 16px; height: 9px; margin-right: 21px; }
.eng { margin-right: 23px; letter-spacing: -.3px; }
.wifi, .vol { width: 20px; height: 16px; margin-right: 10px; }
.bat { width: 20px; height: 16px; margin-right: 17px; }
.clock { text-align: right; line-height: 20px; width: 69px; letter-spacing: -.15px; }
.note { width: 20px; height: 20px; border-radius: 50%; background: #0078d7; color: #fff; font-size: 13px; line-height: 20px; text-align: center; margin-left: 9px; }
```
